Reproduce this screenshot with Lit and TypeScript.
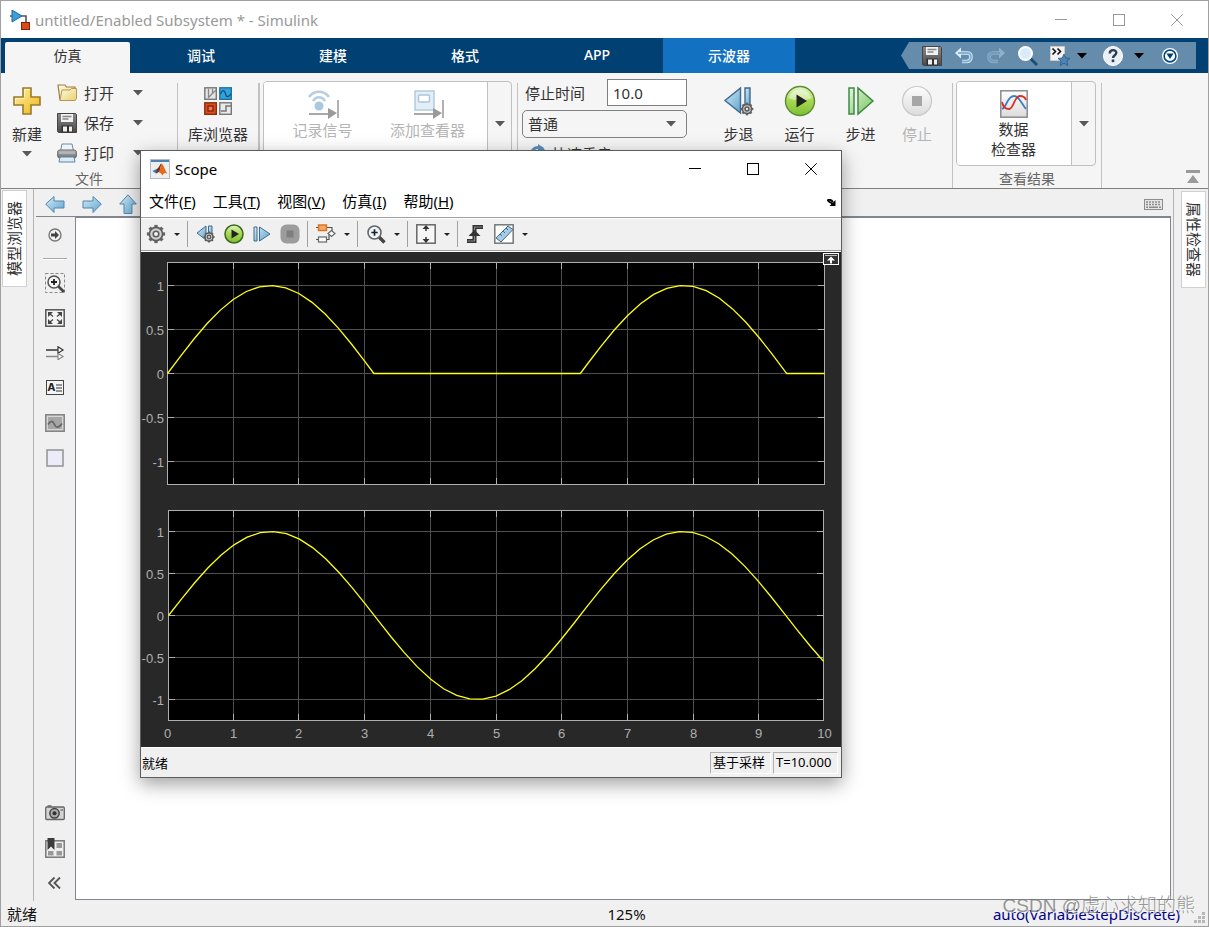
import { LitElement, html, css, svg, TemplateResult, SVGTemplateResult } from "lit";
import { customElement, state } from "lit/decorators.js";

const icon = (size: number, body: SVGTemplateResult, h = size) =>
  html`<svg class="ico" width=${size} height=${h} viewBox="0 0 ${size} ${h}" aria-hidden="true">${body}</svg>`;

const caret = html`<svg class="ico" width="10" height="6" viewBox="0 0 10 6" aria-hidden="true"><path d="M0 0h10L5 5.5z" fill="#585858"/></svg>`;
const blackCaret = html`<svg class="ico" width="10" height="6" viewBox="0 0 10 6" aria-hidden="true"><path d="M0 0h10L5 5.5z" fill="#000"/></svg>`;
const tinyCaret = html`<svg class="ico" width="6" height="3" viewBox="0 0 6 3" aria-hidden="true"><path d="M0 0h6L3 3z" fill="#222"/></svg>`;

const cog = (cx: number, cy: number, r: number) => svg`
  ${[0, 45, 90, 135, 180, 225, 270, 315].map(a => svg`<rect x=${cx - r * 0.25} y=${cy - r * 1.38} width=${r * 0.5} height=${r * 0.5} fill="#666" transform="rotate(${a} ${cx} ${cy})"/>`)}
  <circle cx=${cx} cy=${cy} r=${r} fill="#d0d0d0" stroke="#5c5c5c" stroke-width="1.6"/>
  <circle cx=${cx} cy=${cy} r=${r * 0.42} fill="#f4f4f4" stroke="#5c5c5c" stroke-width="1.6"/>`;

const I = {
  simulink: icon(20, svg`<path d="M0 6h4M11 6h5v8" fill="none" stroke="#555" stroke-width="1.6"/><path d="M2 0l10 6-10 6z" fill="#3ba0d8" stroke="#1b6da3"/><rect x="11.500" y="12.500" width="8" height="7" fill="#d94a1e" stroke="#7d2306"/>`),
  matlab: icon(20, svg`<rect x=".5" y=".5" width="19" height="19" fill="#eceef0" stroke="#b5bcc4"/><path d="M1 1h18v2H1z" fill="#4d82b4"/><path d="M2.500 12l5-2.600 1.800 2.100L6 14.500z" fill="#3a78b8"/><path d="M7 10c2-1.200 3-5.200 4.500-5.500L9.600 12 8 13.500 6 14.500z" fill="#7b2c1e"/><path d="M11.500 4.500c2 1 3.500 7 6 10.500-2-1.500-3-1.600-5.300 1.500-.8-1.900-1.700-2.800-3.400-3.300 1.400-1.700 1.800-6.700 2.700-8.700z" fill="#e26a1b"/>`),
  plus: icon(28, svg`<path d="M10 1h8v9h9v8h-9v9h-8v-9H1v-8h9z" fill="url(#gold)" stroke="#9a7b2c" stroke-width="1.600"/><path d="M11.500 9.500v-7h5M2.500 16.500v-5h9" fill="none" stroke="#fff6c4"/>`),
  open: icon(20, svg`<path d="M1 2h7l1.500 2H18v13H3z" fill="url(#gold2)" stroke="#97804a" stroke-width="1.200"/><path d="M3 17.500L5 7h8l1.500-1.500h5v10l-1.500 2z" fill="url(#gold2)" stroke="#b39a58"/>`),
  save: icon(20, svg`<path d="M.5 .5h18l1 1v18H1.500l-1-1z" fill="url(#steel)" stroke="#444"/><path d="M4 1h12v8H4z" fill="#f2f2f2"/><path d="M5.500 3.500h9M5.500 6h6" stroke="#888" stroke-width="1.400"/><path d="M4.500 12.500h11v7h-11z" fill="#303030"/><path d="M6 13.500h4v5H6zM12 13.500h3v5h-3z" fill="#eee"/>`),
  print: icon(20, svg`<path d="M5 1h10l1.500 7h-13z" fill="#eef5fa" stroke="#6c8ba3"/><rect x=".7" y="7" width="18.600" height="8" rx="2" fill="url(#steel2)" stroke="#666"/><path d="M3 14h14l1 5H2z" fill="#dbeaf5" stroke="#5d87a8"/><path d="M2 10h16" stroke="#c4c4c4"/>`),
  library: icon(28, svg`<rect x=".8" y=".8" width="11.500" height="11.500" fill="#e3e5e6" stroke="#777" stroke-width="1.400"/><path d="M4.500 1.500v8.500M8.500 1.500v5M4 11L12 3" stroke="#888" fill="none" stroke-width="1.300"/><rect x="15.800" y=".8" width="11.500" height="11.500" fill="#2fa3dc" stroke="#2470a3" stroke-width="1.400"/><path d="M16.500 7c2-5 4-4 5 0s3 3 5.500 0" stroke="#155180" fill="none" stroke-width="1.300"/><rect x=".8" y="15.800" width="11.500" height="11.500" fill="#dd4b1f" stroke="#8c2c0e" stroke-width="1.400"/><rect x="4" y="19" width="5" height="5" fill="#ee7a50" stroke="#7d2306" stroke-width="1.300"/><rect x="15.800" y="15.800" width="11.500" height="11.500" fill="#e8e9ea" stroke="#777" stroke-width="1.400"/><path d="M17 24h5v-5h5" stroke="#777" fill="none" stroke-width="1.500"/>`),
  log: icon(32, svg`<path d="M2 9c5-7 15-7 20 0M6 13c3-5 9-5 12 0" fill="none" stroke="#b7cfe2" stroke-width="2.600"/><circle cx="12" cy="18" r="4.500" fill="#a9c8e0"/><path d="M2 26h21M31 12v18" stroke="#a9a9a9" stroke-width="1.800"/><path d="M21 20l9 5-9 6z" fill="#9a9a9a"/>`),
  viewer: icon(32, svg`<rect x="3" y="3" width="19" height="19" fill="#e4eef6" stroke="#b4cbdc" stroke-width="1.500"/><rect x="6.500" y="7" width="11" height="7" rx="1" fill="#fff" stroke="#a9c8e0" stroke-width="1.500"/><path d="M2 26h21M31 12v18" stroke="#a9a9a9" stroke-width="1.800"/><path d="M21 20l9 5-9 6z" fill="#9a9a9a"/>`),
  fast: icon(20, svg`<circle cx="10" cy="10" r="6.500" fill="none" stroke="#5b8fb8" stroke-width="3"/><path d="M10 0l6 4-6 4z" fill="#5b8fb8"/>`),
  back: icon(32, svg`<path d="M17.500 3v25L2 15.500z" fill="url(#sky)" stroke="#3e6a8d" stroke-width="1.400"/><path d="M22 3h5v19h-5z" fill="url(#sky)" stroke="#3e6a8d" stroke-width="1.400"/>${cog(24, 24, 4.6)}`),
  run: icon(32, svg`<circle cx="16" cy="16" r="14.500" fill="url(#green)" stroke="#5c8a35" stroke-width="1.400"/><path d="M4.500 13a12 12 0 0 1 23 0c-6 3-16 3-23 0z" fill="#fff" opacity=".45"/><path d="M12.500 9.500l10.500 6.500-10.500 6.500z" fill="#222"/>`),
  step: icon(32, svg`<path d="M4 3h5v26H4zM13 3v26l15-13z" fill="url(#mint)" stroke="#3f8a44" stroke-width="1.500"/>`),
  stop: icon(32, svg`<circle cx="16" cy="16" r="14.500" fill="url(#silver)" stroke="#c8c8c8" stroke-width="1.200"/><rect x="11" y="11" width="10" height="10" fill="#a6a6a6"/>`),
  data: icon(28, svg`<rect x=".8" y=".8" width="26.400" height="26.400" fill="url(#silver)" stroke="#8c8c8c" stroke-width="1.500"/><path d="M2 19c5-2 5-13 12-13 5 0 7 7 12 13" stroke="#3b7fc4" fill="none" stroke-width="1.800"/><path d="M2 12c1 5 4 7 7 7 5 0 5-13 11-13 3 0 5 1 6 4" stroke="#d6312b" fill="none" stroke-width="1.800"/>`),
  collapse: icon(14, svg`<path d="M0 0h14v3H0zM7 5l6 8H1z" fill="#9a9a9a"/>`),
  undo: icon(20, svg`<path d="M5 7h8q4 0 4 4t-4 4.500H8" fill="none" stroke="#dcebf6" stroke-width="3.600"/><path d="M1 7l6-5.500v11z" fill="#dcebf6"/><path d="M4 7h9q4 0 4 4t-4 4.500H8" fill="none" stroke="#7fb2d8" stroke-width="1.800"/>`),
  redo: icon(20, svg`<path d="M15 7H7q-4 0-4 4t4 4.500h5" fill="none" stroke="#8fb0ca" stroke-width="3.600"/><path d="M19 7l-6-5.500v11z" fill="#8fb0ca"/><path d="M14 7H7q-4 0-4 4t4 4.500h5" fill="none" stroke="#739cbd" stroke-width="1.800"/>`),
  search: icon(20, svg`<path d="M12 12l7 7" stroke="#1d4c73" stroke-width="2.800"/><circle cx="7.500" cy="7.500" r="6.500" fill="#d9ebf8" stroke="#fff" stroke-width="2"/>`),
  fav: icon(20, svg`<path d="M.5 .5h14v14H.5z" fill="#f2f2f2" stroke="#ccc"/><path d="M2.500 2.500l3 3-3 3M7.500 2.500l3 3-3 3" fill="none" stroke="#111" stroke-width="1.600"/><path d="M14 8l1.800 4 4.200.4-3.200 2.800 1 4.300-3.800-2.300-3.800 2.300 1-4.300L8 12.400l4.200-.4z" fill="#4c85b5" stroke="#285a85" stroke-width=".8"/>`),
  help: icon(20, svg`<circle cx="10" cy="10" r="9.500" fill="#e9eff4" stroke="#fff"/><path d="M6.800 7.500c0-4.500 6.700-4.200 6.500-.5-.1 2.200-3.300 2.300-3.300 5" fill="none" stroke="#2c3e50" stroke-width="2.400"/><rect x="8.700" y="13.500" width="2.600" height="2.600" fill="#2c3e50"/>`),
  more: icon(16, svg`<circle cx="8" cy="8" r="8" fill="#fff"/><circle cx="8" cy="8" r="5.900" fill="#fff" stroke="#004a80" stroke-width="1.600"/><path d="M4.500 5.500h7L8 11z" fill="#003c6c"/>`),
  left: icon(20, svg`<path d="M.7 9L9 1.500V6h10v7H9v4.500z" fill="url(#sky)" stroke="#4f87ad"/>`, 18),
  right: icon(20, svg`<path d="M19.300 9L11 1.500V6H1v7h10v4.500z" fill="url(#sky)" stroke="#4f87ad"/>`, 18),
  up: icon(18, svg`<path d="M9 .8L17.300 10H13v9.500H5V10H.7z" fill="url(#sky)" stroke="#4f87ad"/>`, 20),
  keyboard: icon(19, svg`<rect x=".5" y=".5" width="18" height="10" fill="#e6e6e6" stroke="#8c8c8c"/><path d="M2 3h15M2 5.500h15" stroke="#8c8c8c" stroke-width="1.400" stroke-dasharray="2 1"/><path d="M2 8.300h2M5 8.300h9M15 8.300h2" stroke="#8c8c8c" stroke-width="1.400"/>`, 11),
  enter: icon(14, svg`<circle cx="7" cy="7" r="6" fill="#f4f4f4" stroke="#777" stroke-width="1.400"/><path d="M3 5.500h4V3l4 4-4 4V8.500H3z" fill="#444"/>`),
  zoomBox: icon(20, svg`<rect x=".5" y=".5" width="19" height="19" fill="none" stroke="#888" stroke-dasharray="3 2"/><path d="M13 13l6 6" stroke="#444" stroke-width="2.600"/><circle cx="9" cy="9" r="6" fill="#f4f6f8" stroke="#555" stroke-width="1.500"/><path d="M9 6v6M6 9h6" stroke="#222" stroke-width="1.800"/>`),
  fitView: icon(20, svg`<rect x=".8" y=".8" width="18.400" height="16.400" fill="#f4f4f4" stroke="#555" stroke-width="1.500"/><path d="M3 3h5L3 8zM17 3h-5l5 5zM3 15h5l-5-5zM17 15h-5l5-5z" fill="#444"/><path d="M5 5l3 2.500M15 5l-3 2.500M5 13l3-2.500M15 13l-3-2.500" stroke="#444" stroke-width="1.300"/>`, 18),
  arrows: icon(20, svg`<path d="M1 4h16" stroke="#333" stroke-width="1.500"/><path d="M13 .8L18 4l-5 3.200z" fill="#fff" stroke="#333" stroke-width="1.200"/><path d="M1 10.500h16" stroke="#888" stroke-width="1.500"/><path d="M13 7.500l5 3-5 3.200z" fill="#fff" stroke="#888" stroke-width="1.200"/>`, 14),
  image: icon(20, svg`<rect x=".8" y=".8" width="18.400" height="16.400" fill="#d6d6d6" stroke="#808080" stroke-width="1.500"/><rect x="3" y="3" width="14" height="12" fill="#a6a6a6"/><path d="M3 10.500c3-5 5-3.500 6.500 0s4 4 7.500-1" fill="none" stroke="#666" stroke-width="1.700"/>`, 18),
  area: icon(18, svg`<rect x="1" y="1" width="16" height="16" fill="#ebebfa" stroke="#999" stroke-width="1.600"/>`),
  camera: icon(20, svg`<path d="M2.500 0h4v2h-4z" fill="#888"/><rect x=".7" y="2" width="18.600" height="12.500" rx="1" fill="#d4d4d4" stroke="#666" stroke-width="1.300"/><circle cx="9.500" cy="8.300" r="4.700" fill="#aaa" stroke="#444" stroke-width="1.500"/><circle cx="9.500" cy="8.300" r="2" fill="#333"/><path d="M15.500 5h2.500" stroke="#777" stroke-width="1.500"/>`, 16),
  book: icon(20, svg`<rect x=".8" y="2.800" width="18.400" height="16.400" fill="#efefef" stroke="#777" stroke-width="1.500"/><path d="M11.500 5h5.500v5h-5.500zM3 13h5.500v4.500H3zM11.500 13h5.500v4.500h-5.500z" fill="#999"/><path d="M2.500 0h7v12l-3.500-3.500L2.500 12z" fill="#3c3c3c"/>`),
  chevrons: icon(13, svg`<path d="M6.500 .5L1 6l5.500 5.500M12 .5L6.500 6l5.500 5.500" fill="none" stroke="#555" stroke-width="1.900"/>`, 12),
  gear: icon(20, cog(10, 10, 6.6)),
  sBack: icon(20, svg`<path d="M10 2v14L1 9z" fill="url(#sky)" stroke="#3e6a8d"/><path d="M12.500 2h3.500v10h-3.500z" fill="url(#sky)" stroke="#3e6a8d"/>${cog(13, 13, 4)}`),
  sRun: icon(20, svg`<circle cx="10" cy="10" r="9" fill="url(#green)" stroke="#3f6a1e" stroke-width="1.600"/><path d="M7.500 5.500L15 10l-7.500 4.500z" fill="#222"/>`),
  sStep: icon(20, svg`<path d="M2 3h3v14H2zM7.500 3v14L18 10z" fill="url(#sky)" stroke="#3e6a8d"/>`),
  sStop: icon(20, svg`<rect x=".5" y=".5" width="19" height="19" rx="6" fill="#9c9c9c"/><rect x="6.500" y="6.500" width="7" height="7" fill="#7e7e7e"/>`),
  blocks: icon(20, svg`<path d="M0 3.500h3M10 3.500h6v4M0 15.500h3M10 15.500h3v-5" fill="none" stroke="#555" stroke-width="1.200"/><rect x="2.500" y="1" width="8" height="5.500" fill="#f7a860" stroke="#d9701b" stroke-width="1.400"/><rect x="2.500" y="13" width="8" height="5" fill="#fff" stroke="#666" stroke-width="1.200"/><path d="M12 9.500l3.500-3 3.500 3-3.500 3z" fill="#fff" stroke="#666" stroke-width="1.200"/>`),
  sZoom: icon(20, svg`<path d="M13 13l5.500 5.500" stroke="#444" stroke-width="3.400"/><circle cx="8.500" cy="8.500" r="6.500" fill="#eef4f8" stroke="#666" stroke-width="1.600"/><path d="M8.500 5.300v6.400M5.300 8.500h6.400" stroke="#222" stroke-width="1.700"/>`),
  fit: icon(20, svg`<rect x=".8" y=".8" width="18.400" height="18.400" fill="#f6f6f6" stroke="#666" stroke-width="1.500"/><path d="M10 1l3.500 4h-7zM10 19l3.500-4h-7z" fill="#333"/><path d="M10 4v3M10 13v3" stroke="#333" stroke-width="1.500"/>`),
  trigger: icon(20, svg`<path d="M1 17h7.500V3H17" fill="none" stroke="#333" stroke-width="4"/><path d="M1.500 17h7V3h8" fill="none" stroke="#888" stroke-width="1.200"/><path d="M2.500 12L8.500 6l6 6z" fill="#333"/>`),
  measure: icon(20, svg`<rect x=".8" y=".8" width="18.400" height="18.400" fill="#fff" stroke="#777" stroke-width="1.500"/><path d="M2 14L14 2l5 3.500L7 18z" fill="#a6cbe4" stroke="#3e6a8d"/><path d="M6 10l2 2M9 7l2 2M12 4l2 2" stroke="#3e6a8d"/>`),
  dock: icon(9, svg`<path d="M0 1.500c3-1.500 5 0 6 1.500M1 2l5 3" stroke="#000" stroke-width="1.800" fill="none"/><path d="M8.500 1v6h-6z" fill="#000"/>`, 7),
  min: icon(12, svg`<path d="M0 5.500h12" stroke="currentColor"/>`),
  max: icon(12, svg`<rect x=".5" y=".5" width="11" height="11" fill="none" stroke="currentColor"/>`),
  close: icon(12, svg`<path d="M.3 .3l11.400 11.400M11.700 .3L.3 11.700" stroke="currentColor"/>`),
};

interface Axes {
  left: number; right: number; top: number; bottom: number; zero: number; unit: number;
  f: (t: number) => number; knots: number[]; bottomLabels: boolean;
}

const T_MAX = 10;
const GRID_LEFT = 26;
const GRID_WIDTH = 657;
const SAMPLES = Array.from({ length: 51 }, (_, i) => i * 0.2);
const AXES: Axes[] = [
  { left: 26, right: 683, top: 11, bottom: 233, zero: 122, unit: 88, f: t => Math.max(0, Math.sin(t)), knots: [Math.PI, 2 * Math.PI, 3 * Math.PI], bottomLabels: false },
  { left: 27, right: 682, top: 259, bottom: 469, zero: 364, unit: 84, f: Math.sin, knots: [], bottomLabels: true },
];

@customElement("app-root")
export class AppRoot extends LitElement {
  @state() private stopTime = "10.0";

  static styles = css`
    :host { display: block; font-family: "Noto Sans", "Noto Sans CJK SC", sans-serif; font-size: 15px; color: #333; }
    * { box-sizing: border-box; }
    .ico { display: block; flex: none; }
    .defs { position: absolute; width: 0; height: 0; }
    button { font: inherit; color: inherit; border: 0; background: none; padding: 0; margin: 0; display: flex; align-items: center; justify-content: center; white-space: nowrap; }
    .frame { position: relative; min-height: 100vh; display: flex; flex-direction: column; border: 1px solid #a0a0a0; background: #f0f0f0; overflow: hidden; }
    .title { display: flex; align-items: center; height: 37px; background: #fff; color: #999; padding-left: 9px; gap: 5px; flex: none; }
    .title h1 { margin: 0; font-size: 15px; font-weight: 400; flex: 1; white-space: nowrap; }
    .wc { display: flex; padding-right: 2px; align-self: stretch; }
    .wc button { width: 58px; }
    .tabs { display: flex; background: #004073; height: 35px; padding-left: 4px; flex: none; }
    .tab { width: 132px; color: #fff; font-size: 14px; font-weight: 500; padding-bottom: 2px; }
    .tab.on { width: 125px; margin: 4px 5px 0 0; padding-bottom: 6px; background: #f5f5f5; color: #333; border-radius: 2px 2px 0 0; font-weight: 400; }
    .tab.hot { background: #1271c0; }
    .fill { flex: 1; }
    .quick { display: flex; align-items: center; height: 27px; margin: 4px 12px 0 0; width: 295px; padding-left: 21px; background: #668cab; clip-path: polygon(0 50%, 8px 0, 100% 0, 100% 100%, 8px 100%); }
    .quick button { margin-right: 12px; }
    .quick .drop { margin-right: 16px; margin-left: -5px; }
    .quick .drop.wide { margin: 0 15px 0 -1px; }
    .quick .end { margin: 0 0 0 3px; }
    .ribbon { display: flex; background: #f5f5f5; height: 116px; border-bottom: 1px solid #808080; flex: none; }
    .sec { display: flex; flex-direction: column; flex: none; }
    .sec .body { display: flex; flex: 1; }
    .sec .name { height: 18px; line-height: 18px; font-size: 14px; text-align: center; color: #666; }
    .div { width: 1px; margin-top: 10px; background: #c2c2c2; flex: none; }
    .div.bold { width: 2px; }
    .file { width: 176px; }
    .big { flex-direction: column; align-self: flex-start; line-height: 20px; }
    .new { width: 52px; padding-top: 14px; gap: 9px; }
    .new .ico + span + .ico { margin-top: -2px; }
    .rows { padding: 5px 0 0 4px; width: 90px; }
    .row { display: flex; height: 30px; align-items: center; justify-content: space-between; }
    .row button { gap: 7px; line-height: 20px; }
    .lib { width: 80px; padding-top: 14px; gap: 9px; }
    .gal { display: flex; height: 85px; margin: 8px 5px 0 3px; border: 1px solid #c0c0c0; border-radius: 4px; overflow: hidden; }
    .gal .items { display: flex; background: #fff; padding: 0 7px 0 6px; border-right: 1px solid #c0c0c0; }
    .gal .items button { width: 105px; padding-top: 6px; }
    .gal .items .one { width: 101px; padding-top: 8px; gap: 1px; }
    .gal .more { width: 23px; }
    .off { color: #b4b4b4; }
    .set { width: 169px; padding: 6px 0 0 4px; display: flex; flex-direction: column; gap: 4px; }
    .field { display: flex; align-items: center; justify-content: space-between; padding-left: 3px; }
    .field input { width: 80px; height: 27px; border: 1px solid #808080; background: #fff; font: inherit; color: inherit; padding: 0 5px; }
    .pick { display: grid; align-items: center; }
    .pick select { grid-area: 1 / 1; appearance: none; height: 28px; border: 1px solid #808080; border-radius: 5px; background: #f5f5f5; font: inherit; color: inherit; padding: 0 5px; }
    .pick .ico { grid-area: 1 / 1; justify-self: end; margin-right: 11px; pointer-events: none; }
    .quickstart { justify-content: flex-start; gap: 4px; padding: 0 6px; line-height: 24px; }
    .sim { display: flex; padding: 12px 9px 0 21px; }
    .sim button { width: 61px; gap: 7px; }
    .sim .last { width: 52px; }
    .tuck { align-self: flex-end; margin: 0 8px 4px 0; }
    .work { display: flex; flex: 1; }
    .rail { width: 33px; border-right: 1px solid #b4b4b4; padding: 1px 0 0 1px; flex: none; }
    .rail.r { width: 35px; border-right: 0; border-left: 1px solid #b4b4b4; padding: 2px 0 0 7px; }
    .side { width: 25px; height: 97px; background: #fff; border: 1px solid #d0d0d0; writing-mode: vertical-rl; text-orientation: sideways; line-height: 23px; font-size: 15px; }
    .side.l { transform: rotate(180deg); }
    .mid { flex: 1; display: flex; flex-direction: column; padding: 0 2px 1px 2px; }
    .nav { display: flex; align-items: center; height: 28px; border-bottom: 1px solid #808590; padding: 3px 8px 0 9px; gap: 17px; }
    .pane { display: flex; flex: 1; }
    .pal { width: 39px; display: flex; flex-direction: column; align-items: center; padding: 0 2px 0 0; }
    .pal button { height: 35px; width: 28px; }
    .pal hr { width: 24px; height: 2px; border: 0; border-top: 1px solid #a8a8a8; background: #fff; margin: 6px 0 5px; }
    .canvas { flex: 1; background: #fff; border: 1px solid #808590; }
    .note { width: 18px; height: 15px; border: 1px solid #444; background: #f4f4f4; font: 700 10px/12px "DejaVu Sans", sans-serif; color: #222; display: flex; gap: 1px; align-items: center; padding-left: 1px; }
    .status { display: grid; grid-template-columns: 1fr auto 1fr; height: 25px; align-items: center; padding: 0 2px 0 6px; color: #111; flex: none; }
    .status .zoom { padding-left: 40px; }
    .status .solver { justify-self: end; display: flex; gap: 14px; align-items: flex-end; color: #00008b; }
    .mark { position: absolute; right: 13px; bottom: 6px; font-size: 19px; line-height: 28px; color: #777; opacity: .75; text-shadow: 1px 1px 0 #fff; font-family: "Liberation Sans", "Noto Sans CJK SC", sans-serif; font-weight: 300; }

    .scope { position: absolute; left: 139px; top: 149px; width: 702px; border: 1px solid #5c5c5c; background: #f0f0f0; box-shadow: 0 6px 18px rgba(0, 0, 0, .38); color: #000; }
    .scope .title { height: 36px; color: #000; gap: 5px; }
    .scope .wc { padding-right: 1px; }
    .menu { display: flex; align-items: center; background: #fff; height: 30px; gap: 17px; padding: 0 5px 0 8px; font-size: 15px; }
    .tools { display: flex; align-items: center; height: 34px; padding: 0 0 0 1px; border-top: 1px solid #a0a0a0; border-bottom: 1px solid #a0a0a0; box-shadow: inset 0 1px 0 #fff; }
    .menu button { line-height: 20px; padding-bottom: 2px; }
    .tools button { width: 28px; height: 28px; }
    .tools .d { width: 14px; }
    .tools i { width: 1px; height: 26px; background: #a0a0a0; margin: 0 4px 0 3px; }
    .plot { display: block; width: 100%; background: #282828; }
    .tick { font: 13px "Liberation Sans", sans-serif; fill: #afafaf; }
    .foot { display: flex; align-items: center; height: 30px; border-top: 1px solid #fff; font-size: 13px; padding: 0 3px 0 1px; gap: 2px; }
    .cell { height: 22px; line-height: 19px; border: 1px solid; border-color: #b0b0b0 #fff #fff #b0b0b0; padding: 0 2px; width: 61px; white-space: nowrap; }
    .cell.t { width: 65px; }
  `;

  private controls() {
    return html`<div class="wc"><button aria-label="最小化">${I.min}</button><button aria-label="最大化">${I.max}</button><button aria-label="关闭">${I.close}</button></div>`;
  }

  private axes(a: Axes): SVGTemplateResult {
    const x = (t: number) => a.left + 0.5 + ((a.right - a.left) * t) / T_MAX;
    const y = (v: number) => a.zero + 0.5 - v * a.unit;
    const snap = (n: number) => Math.floor(n) + 0.5;
    const gx = (t: number) => snap(GRID_LEFT + 0.5 + (GRID_WIDTH * t) / T_MAX);
    const ts = [...SAMPLES, ...a.knots].sort((p, q) => p - q);
    const points = ts.map(t => `${x(t).toFixed(2)},${y(a.f(t)).toFixed(2)}`).join(" ");
    const cols = Array.from({ length: T_MAX + 1 }, (_, i) => i);
    const rows = [1, 0.5, 0, -0.5, -1];
    const w = a.right - a.left, h = a.bottom - a.top;
    return svg`
      <rect x=${a.left + 0.5} y=${a.top + 0.5} width=${w} height=${h} fill="#000"/>
      ${cols.slice(1, -1).map(c => svg`
        <path d="M${gx(c)} ${a.top}V${a.bottom}" stroke="#505050"/>
        <path d="M${gx(c)} ${a.top}v7M${gx(c)} ${a.bottom}v-6" stroke="#afafaf"/>`)}
      ${rows.map(r => svg`
        <path d="M${a.left} ${snap(y(r))}H${a.right}" stroke="#505050"/>
        <path d="M${a.left} ${snap(y(r))}h7M${a.right} ${snap(y(r))}h-6" stroke="#afafaf"/>
        <text class="tick" x="23" y=${snap(y(r)) + 5.5} text-anchor="end">${r}</text>`)}
      <rect x=${a.left + 0.5} y=${a.top + 0.5} width=${w} height=${h} fill="none" stroke="#afafaf"/>
      ${a.bottomLabels ? cols.map(c => svg`<text class="tick" x=${gx(c)} y=${a.bottom + 18} text-anchor="middle">${c}</text>`) : ""}
      <polyline points=${points} fill="none" stroke="#ffff11" stroke-width="1.3"/>`;
  }

  private scope(): TemplateResult {
    const drop = html`<button class="d" aria-label="更多">${tinyCaret}</button>`;
    const menus = [["文件", "F"], ["工具", "T"], ["视图", "V"], ["仿真", "I"], ["帮助", "H"]];
    return html`<section class="scope" aria-label="Scope">
      <header class="title">${I.matlab}<h1>Scope</h1>${this.controls()}</header>
      <nav class="menu">${menus.map(([n, k]) => html`<button><span>${n}(<u>${k}</u>)</span></button>`)}<span class="fill"></span>${I.dock}</nav>
      <div class="tools">
        <button aria-label="配置">${I.gear}</button>${drop}<i></i>
        <button aria-label="步退">${I.sBack}</button><button aria-label="运行">${I.sRun}</button><button aria-label="步进">${I.sStep}</button><button aria-label="停止">${I.sStop}</button><i></i>
        <button aria-label="模块">${I.blocks}</button>${drop}<i></i>
        <button aria-label="缩放">${I.sZoom}</button>${drop}<i></i>
        <button aria-label="适应">${I.fit}</button>${drop}<i></i>
        <button aria-label="触发">${I.trigger}</button><button aria-label="测量">${I.measure}</button>${drop}
      </div>
      <svg class="plot" viewBox="0 0 700 496" role="img" aria-label="Scope">
        <path d="M0 .5h700" stroke="#fff"/>
        ${AXES.map(a => this.axes(a))}
        <rect x="682.5" y="2.5" width="15" height="11" fill="#333" stroke="#fff"/>
        <path d="M684 4.500h12" stroke="#bbb"/><path d="M690 5.500l4 4h-8zM689 9h2v3.500h-2z" fill="#fff"/>
      </svg>
      <footer class="foot"><span class="fill">就绪</span><span class="cell">基于采样</span><span class="cell t">T=10.000</span></footer>
    </section>`;
  }

  render() {
    const files: [TemplateResult, string][] = [[I.open, "打开"], [I.save, "保存"], [I.print, "打印"]];
    return html`
      <svg class="defs" aria-hidden="true"><defs>
        <linearGradient id="gold" x2="1" y2="1"><stop stop-color="#fff3a8"/><stop offset="1" stop-color="#eeb412"/></linearGradient>
        <linearGradient id="gold2" x2="1" y2="1"><stop stop-color="#fffbe2"/><stop offset="1" stop-color="#e9cf6d"/></linearGradient>
        <linearGradient id="steel" x2="0" y2="1"><stop stop-color="#8a8a8a"/><stop offset="1" stop-color="#4a4a4a"/></linearGradient>
        <linearGradient id="steel2" x2="0" y2="1"><stop stop-color="#c0c0c0"/><stop offset="1" stop-color="#6a6a6a"/></linearGradient>
        <linearGradient id="sky" x2="1" y2="1"><stop stop-color="#d6ecf8"/><stop offset="1" stop-color="#5fa3cd"/></linearGradient>
        <linearGradient id="mint" x2="1" y2="1"><stop stop-color="#e3f6dc"/><stop offset="1" stop-color="#77c460"/></linearGradient>
        <linearGradient id="green" x2="0" y2="1"><stop stop-color="#e6f5c8"/><stop offset=".5" stop-color="#a5d84e"/><stop offset="1" stop-color="#7cbf38"/></linearGradient>
        <linearGradient id="silver" x2="0" y2="1"><stop stop-color="#fdfdfd"/><stop offset="1" stop-color="#dcdcdc"/></linearGradient>
      </defs></svg>
      <main class="frame">
        <header class="title">${I.simulink}<h1>untitled/Enabled Subsystem * - Simulink</h1>${this.controls()}</header>
        <nav class="tabs">
          <button class="tab on">仿真</button><button class="tab">调试</button><button class="tab">建模</button><button class="tab">格式</button><button class="tab">APP</button><button class="tab hot">示波器</button>
          <span class="fill"></span>
          <div class="quick">
            <button aria-label="保存">${I.save}</button><button aria-label="撤销">${I.undo}</button><button aria-label="重做">${I.redo}</button><button aria-label="搜索">${I.search}</button><button aria-label="收藏">${I.fav}</button><button class="drop" aria-label="更多收藏">${blackCaret}</button><button aria-label="帮助">${I.help}</button><button class="drop wide" aria-label="更多帮助">${blackCaret}</button><button class="end" aria-label="选项">${I.more}</button>
          </div>
        </nav>
        <div class="ribbon">
          <div class="sec file">
            <div class="body">
              <button class="big new">${I.plus}<span>新建</span>${caret}</button>
              <div class="rows">${files.map(([i, n]) => html`<div class="row"><button>${i}<span>${n}</span></button><button aria-label="${n}选项">${caret}</button></div>`)}</div>
            </div>
            <div class="name">文件</div>
          </div>
          <span class="div"></span>
          <button class="big lib">${I.library}<span>库浏览器</span></button>
          <span class="div bold"></span>
          <div class="gal">
            <div class="items"><button class="big off">${I.log}<span>记录信号</span></button><button class="big off">${I.viewer}<span>添加查看器</span></button></div>
            <button class="more" aria-label="展开">${caret}</button>
          </div>
          <span class="div"></span>
          <div class="set">
            <div class="field"><label for="stop">停止时间</label><input id="stop" .value=${this.stopTime} @input=${(e: Event) => (this.stopTime = (e.target as HTMLInputElement).value)}></div>
            <div class="pick"><select aria-label="仿真模式"><option>普通</option></select>${caret}</div>
            <button class="quickstart">${I.fast}<span>快速重启</span></button>
          </div>
          <div class="sim">
            <button class="big">${I.back}<span>步退</span></button><button class="big">${I.run}<span>运行</span></button><button class="big">${I.step}<span>步进</span></button><button class="big last off">${I.stop}<span>停止</span></button>
          </div>
          <span class="div"></span>
          <div class="sec">
            <div class="body"><div class="gal">
              <div class="items"><button class="big one">${I.data}<span>数据<br>检查器</span></button></div>
              <button class="more" aria-label="展开">${caret}</button>
            </div></div>
            <div class="name">查看结果</div>
          </div>
          <span class="div"></span>
          <span class="fill"></span>
          <button class="tuck" aria-label="折叠">${I.collapse}</button>
        </div>
        <div class="work">
          <aside class="rail"><button class="side l">模型浏览器</button></aside>
          <div class="mid">
            <div class="nav"><button aria-label="后退">${I.left}</button><button aria-label="前进">${I.right}</button><button aria-label="向上">${I.up}</button><span class="fill"></span>${I.keyboard}</div>
            <div class="pane">
              <div class="pal">
                <button aria-label="进入">${I.enter}</button><hr>
                <button aria-label="缩放">${I.zoomBox}</button><button aria-label="适应窗口">${I.fitView}</button><button aria-label="信号">${I.arrows}</button>
                <button aria-label="注释"><span class="note">A<svg class="ico" width="6" height="8" viewBox="0 0 6 8"><path d="M0 1h6M0 4h6M0 7h6" stroke="#333"/></svg></span></button>
                <button aria-label="图像">${I.image}</button><button aria-label="区域">${I.area}</button>
                <span class="fill"></span>
                <button aria-label="截图">${I.camera}</button><button aria-label="书签">${I.book}</button><button aria-label="收起">${I.chevrons}</button>
              </div>
              <div class="canvas"></div>
            </div>
          </div>
          <aside class="rail r"><button class="side">属性检查器</button></aside>
        </div>
        <footer class="status"><span>就绪</span><span class="zoom">125%</span><span class="solver">auto(VariableStepDiscrete)${icon(12, svg`<path d="M8 0h3v3H8zM4 4h3v3H4zM8 4h3v3H8zM0 8h3v3H0zM4 8h3v3H4zM8 8h3v3H8z" fill="#b8b8b8"/>`)}</span></footer>
        <div class="mark">CSDN @虚心求知的熊</div>
        ${this.scope()}
      </main>`;
  }
}
